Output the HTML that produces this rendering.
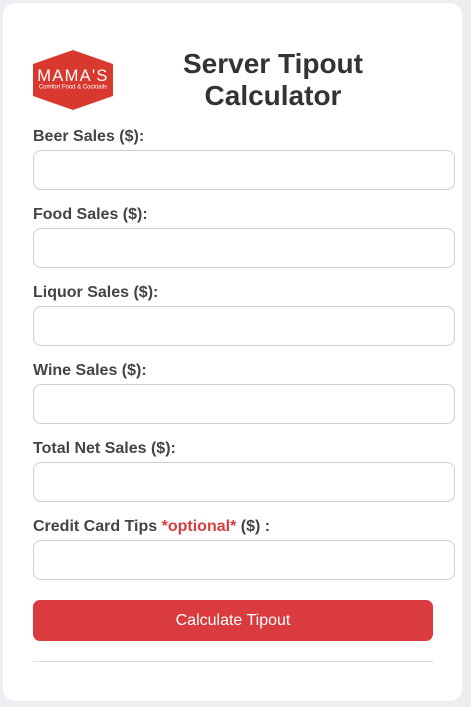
<!DOCTYPE html>
<html><head><style>
body{margin:0;background:#eceef1;font-family:"Liberation Sans",Arial,sans-serif;width:471px;height:707px;overflow:hidden;position:relative}
.card{position:absolute;left:3px;top:3px;width:459px;height:698px;background:#fff;border-radius:12px}
.title{position:absolute;left:143px;width:260px;top:48px;text-align:center;font-size:28px;font-weight:bold;color:#333;line-height:32px}
.lbl{position:absolute;left:33px;font-size:16px;font-weight:bold;color:#444}
.in{position:absolute;left:33px;width:420px;height:38px;border:1px solid #ccc;border-radius:8px;box-sizing:content-box}
.btn{position:absolute;left:33px;top:600px;width:400px;height:41px;background:#d93b3f;border-radius:7px;color:#fff;font-size:16px;text-align:center;line-height:41px}
.hr{position:absolute;left:33px;top:661px;width:400px;height:1px;background:#ddd}
</style></head><body>
<div class="card"></div>
<svg style="position:absolute;left:33px;top:50px" width="80" height="60" viewBox="0 0 80 60">
<polygon points="40,0 80,14 80,46 40,60 0,46 0,14" fill="#d9382e"/>
<text x="40" y="31" text-anchor="middle" fill="#fff" font-family="Liberation Sans" font-size="16.5" letter-spacing="1.3">MAMA'S</text>
<text x="40" y="38.5" text-anchor="middle" fill="#fff" font-family="Liberation Sans" font-size="6">Comfort Food &amp; Cocktails</text>
</svg>
<div class="title">Server Tipout<br>Calculator</div>
<div class="lbl" style="top:128px">Beer Sales ($):</div><div class="in" style="top:150px"></div>
<div class="lbl" style="top:206px">Food Sales ($):</div><div class="in" style="top:228px"></div>
<div class="lbl" style="top:284px">Liquor Sales ($):</div><div class="in" style="top:306px"></div>
<div class="lbl" style="top:362px">Wine Sales ($):</div><div class="in" style="top:384px"></div>
<div class="lbl" style="top:440px">Total Net Sales ($):</div><div class="in" style="top:462px"></div>
<div class="lbl" style="top:518px">Credit Card Tips <span style="color:#d93b3f">*optional*</span> ($) :</div><div class="in" style="top:540px"></div>
<div class="btn">Calculate Tipout</div>
<div class="hr"></div>
</body></html>
